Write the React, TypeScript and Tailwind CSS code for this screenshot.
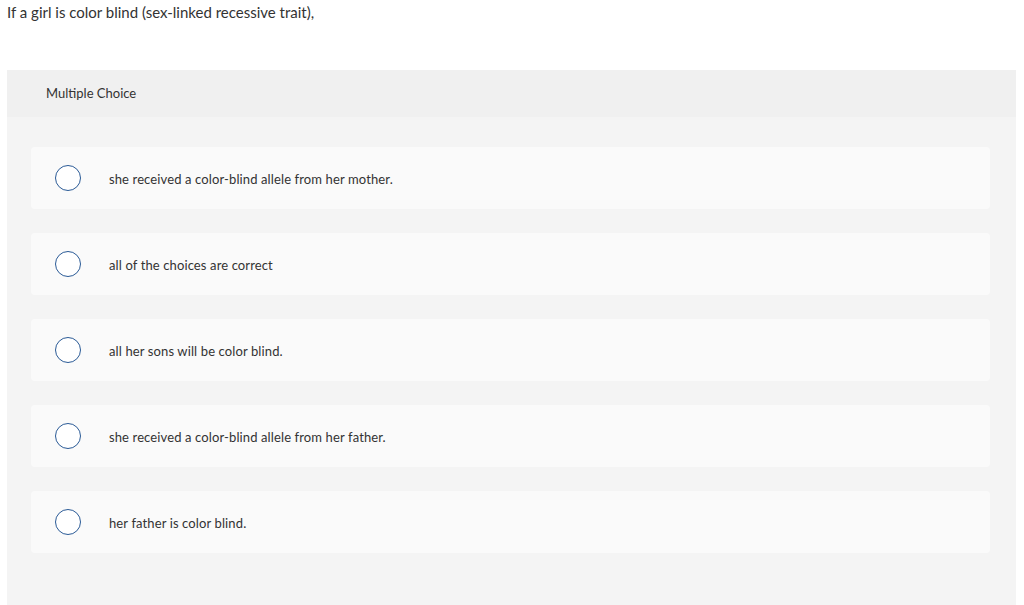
import React from 'react';

const choices = [
  'she received a color-blind allele from her mother.',
  'all of the choices are correct',
  'all her sons will be color blind.',
  'she received a color-blind allele from her father.',
  'her father is color blind.',
];

export default function App() {
  return (
    <div className="min-h-[605px] bg-white font-['Lato','Liberation_Sans',sans-serif] text-[#333]">
      <p className="px-[7px] pt-[3px] text-[15px] leading-[18px]">
        If a girl is color blind (sex-linked recessive trait),
      </p>

      <div className="mx-[7px] mt-[49px] w-[1009px] bg-[#f4f4f4]">
        <div className="flex h-[47px] items-center bg-[#f0f0f0] pt-[1px] pl-[39px] text-[13px]">
          Multiple Choice
        </div>

        <div className="flex flex-col gap-[24px] pt-[30px] pr-[26px] pb-[52px] pl-[24px]">
          {choices.map((c) => (
            <label
              key={c}
              className="flex h-[62px] cursor-pointer items-center rounded-[4px] bg-[#fafafa] pl-[24px]"
            >
              <span className="h-[26px] w-[26px] shrink-0 rounded-full border border-[#2a5a96] bg-white" />
              <span className="ml-[28px] pt-[3px] text-[13px] tracking-[0.12px]">{c}</span>
            </label>
          ))}
        </div>
      </div>
    </div>
  );
}
